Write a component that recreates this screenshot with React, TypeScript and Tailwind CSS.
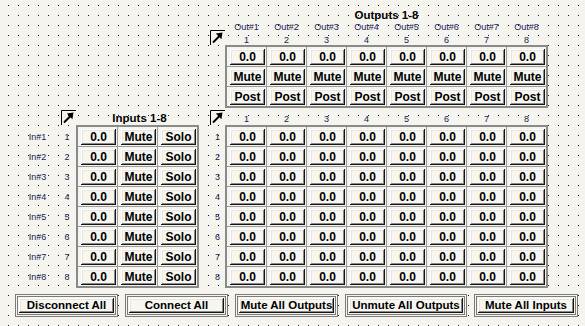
import React from 'react';

const raised =
  'bg-[#f7f6f1] shadow-[inset_-1px_-1px_0_#141414,inset_1px_1px_0_#ffffff,inset_-2px_-2px_0_#8a8a8a,inset_2px_2px_0_#e6e5de]';

const labelText = 'text-[#18204e] text-[9px] leading-[10px]';

// small corner marker with the diagonal arrow
function CornerIcon() {
  return (
    <svg width="15" height="15" viewBox="0 0 15 15" className="block shrink-0">
      <path d="M0.5 15V0.5H15" fill="none" stroke="#000" strokeWidth="1" />
      <path d="M3 12.5L10 5.5" stroke="#000" strokeWidth="2" />
      <path d="M12.5 2.5L5.8 3.6L11.4 9.2Z" fill="#000" />
    </svg>
  );
}

function Cell({ label }: { label: string }) {
  return (
    <div className="flex h-[19px] w-[39px] bg-[#f5f4ef] pl-[3px] pt-[2px]">
      <div
        className={`flex h-[16px] w-[35px] items-center justify-center text-[12px] font-bold leading-none text-black ${raised}`}
      >
        {label}
      </div>
    </div>
  );
}

function BigButton({ label, width }: { label: string; width: string }) {
  return (
    <div className={`h-[23px] border-[3px] border-double border-[#7b7b7b] bg-[#f5f4ef] p-px ${width}`}>
      <div
        className={`flex h-full items-center justify-center text-[11.5px] font-bold leading-none text-black ${raised}`}
      >
        {label}
      </div>
    </div>
  );
}

const cols = [1, 2, 3, 4, 5, 6, 7, 8];

export default function App() {
  return (
    <div className="relative h-[326px] w-[585px] overflow-hidden bg-[#f5f4ef] bg-[image:conic-gradient(from_270deg_at_1px_1px,#1a1a1a_90deg,transparent_0)] bg-[length:10px_10px] bg-[position:8px_5px] font-['Liberation_Sans',Arial,sans-serif] text-black">
      {/* Outputs */}
      <div className="pl-[210px] pt-[8px]">
        <div className="ml-[15px] w-[323px] text-center text-[11.5px] font-bold leading-[14px]">Outputs 1-8</div>
        <div className="flex h-[23px] items-end">
          <CornerIcon />
          <div className="ml-[2px] grid h-full grid-cols-[repeat(8,39px)] gap-x-px">
            {cols.map((c) => (
              <div key={c} className="flex flex-col items-center">
                <span className={`${labelText} h-[11px] leading-[11px]`}>Out#{c}</span>
                <span className={`${labelText} mt-[2px]`}>{c}</span>
              </div>
            ))}
          </div>
        </div>
        <div className="ml-[15px] w-fit border-2 border-[#8a8a8a] bg-[#9c9c9c]">
          <div className="grid grid-cols-[repeat(8,39px)] gap-px">
            {cols.map((c) => <Cell key={`a${c}`} label="0.0" />)}
            {cols.map((c) => <Cell key={`m${c}`} label="Mute" />)}
            {cols.map((c) => <Cell key={`p${c}`} label="Post" />)}
          </div>
        </div>
      </div>

      {/* Inputs + matrix */}
      <div className="mt-[2px] flex">
        <div className="w-[199px]">
          <div className="flex h-[15px]">
            <div className="ml-[61px]">
              <CornerIcon />
            </div>
            <div className="w-[123px] self-end pl-[4px] text-center text-[11.5px] font-bold leading-[14px]">Inputs 1-8</div>
          </div>
          <div className="flex">
            <div className="flex w-[76px] flex-col gap-px pt-[2px]">
              {cols.map((r) => (
                <div key={r} className="flex h-[19px] items-center">
                  <span className={`${labelText} ml-[28px] w-[19px] text-center`}>In#{r}</span>
                  <span className={`${labelText} ml-[16px] w-[8px] text-center`}>{r}</span>
                </div>
              ))}
            </div>
            <div className="border-2 border-[#8a8a8a] bg-[#9c9c9c]">
              <div className="grid grid-cols-[repeat(3,39px)] gap-px">
                {cols.map((r) => (
                  <React.Fragment key={r}>
                    <Cell label="0.0" />
                    <Cell label="Mute" />
                    <Cell label="Solo" />
                  </React.Fragment>
                ))}
              </div>
            </div>
          </div>
        </div>

        <div className="ml-[11px]">
          <div className="flex h-[15px]">
            <CornerIcon />
            <div className="ml-[2px] grid grid-cols-[repeat(8,39px)] gap-x-px">
              {cols.map((c) => (
                <span key={c} className={`${labelText} self-end pb-px text-center`}>
                  {c}
                </span>
              ))}
            </div>
          </div>
          <div className="flex">
            <div className="flex w-[15px] flex-col gap-px pt-[2px]">
              {cols.map((r) => (
                <div key={r} className={`${labelText} flex h-[19px] items-center justify-center`}>
                  {r}
                </div>
              ))}
            </div>
            <div className="border-2 border-[#8a8a8a] bg-[#9c9c9c]">
              <div className="grid grid-cols-[repeat(8,39px)] gap-px">
                {cols.map((r) => cols.map((c) => <Cell key={`${r}-${c}`} label="0.0" />))}
              </div>
            </div>
          </div>
        </div>
      </div>

      {/* Bottom actions */}
      <div className="mt-[6px] flex gap-[7px] pl-[15px]">
        <BigButton label="Disconnect All" width="w-[103px]" />
        <BigButton label="Connect All" width="w-[103px]" />
        <BigButton label="Mute All Outputs" width="w-[103px]" />
        <BigButton label="Unmute All Outputs" width="w-[122px]" />
        <BigButton label="Mute All Inputs" width="w-[104px]" />
      </div>
    </div>
  );
}
